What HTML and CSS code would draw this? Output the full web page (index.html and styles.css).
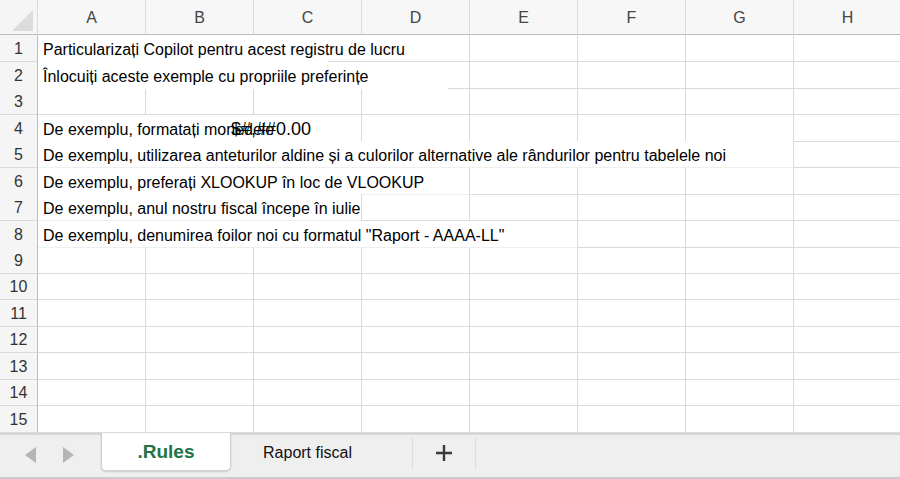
FILE: index.html
```html
<!DOCTYPE html>
<html lang="ro">
<head>
    <meta charset="UTF-8">
    <title>.Rules - Excel</title>
    <link rel="stylesheet" href="styles.css">
</head>
<body>
    <div class="sheet">
        <div class="row head">
            <div class="corner"><span class="tri"></span></div>
            <div class="col">A</div><div class="col">B</div><div class="col">C</div><div class="col">D</div>
            <div class="col">E</div><div class="col">F</div><div class="col">G</div><div class="col">H</div>
        </div>
        <div class="row">
            <div class="num">1</div>
            <div class="cell text span-4 cover-short">Particularizați Copilot pentru acest registru de lucru</div>
            <div class="cell"></div><div class="cell"></div><div class="cell"></div><div class="cell"></div>
        </div>
        <div class="row short">
            <div class="num">2</div>
            <div class="cell text span-4 cover-long">Înlocuiți aceste exemple cu propriile preferințe</div>
            <div class="cell"></div><div class="cell"></div><div class="cell"></div><div class="cell"></div>
        </div>
        <div class="row">
            <div class="num">3</div>
            <div class="cell"></div><div class="cell"></div><div class="cell"></div><div class="cell"></div>
            <div class="cell"></div><div class="cell"></div><div class="cell"></div><div class="cell"></div>
        </div>
        <div class="row short">
            <div class="num">4</div>
            <div class="cell text span-3">De exemplu, formatați monedele<span class="fmt">$#,##0.00</span></div>
            <div class="cell"></div><div class="cell"></div><div class="cell"></div><div class="cell"></div><div class="cell"></div>
        </div>
        <div class="row">
            <div class="num">5</div>
            <div class="cell text span-7">De exemplu, utilizarea anteturilor aldine și a culorilor alternative ale rândurilor pentru tabelele noi</div>
            <div class="cell"></div>
        </div>
        <div class="row short">
            <div class="num">6</div>
            <div class="cell text span-4">De exemplu, preferați XLOOKUP în loc de VLOOKUP</div>
            <div class="cell"></div><div class="cell"></div><div class="cell"></div><div class="cell"></div>
        </div>
        <div class="row">
            <div class="num">7</div>
            <div class="cell text span-3">De exemplu, anul nostru fiscal începe în iulie</div>
            <div class="cell"></div><div class="cell"></div><div class="cell"></div><div class="cell"></div><div class="cell"></div>
        </div>
        <div class="row short">
            <div class="num">8</div>
            <div class="cell text span-5">De exemplu, denumirea foilor noi cu formatul "Raport - AAAA-LL"</div>
            <div class="cell"></div><div class="cell"></div><div class="cell"></div>
        </div>
        <div class="row">
            <div class="num">9</div>
            <div class="cell"></div><div class="cell"></div><div class="cell"></div><div class="cell"></div>
            <div class="cell"></div><div class="cell"></div><div class="cell"></div><div class="cell"></div>
        </div>
        <div class="row short">
            <div class="num">10</div>
            <div class="cell"></div><div class="cell"></div><div class="cell"></div><div class="cell"></div>
            <div class="cell"></div><div class="cell"></div><div class="cell"></div><div class="cell"></div>
        </div>
        <div class="row">
            <div class="num">11</div>
            <div class="cell"></div><div class="cell"></div><div class="cell"></div><div class="cell"></div>
            <div class="cell"></div><div class="cell"></div><div class="cell"></div><div class="cell"></div>
        </div>
        <div class="row short">
            <div class="num">12</div>
            <div class="cell"></div><div class="cell"></div><div class="cell"></div><div class="cell"></div>
            <div class="cell"></div><div class="cell"></div><div class="cell"></div><div class="cell"></div>
        </div>
        <div class="row">
            <div class="num">13</div>
            <div class="cell"></div><div class="cell"></div><div class="cell"></div><div class="cell"></div>
            <div class="cell"></div><div class="cell"></div><div class="cell"></div><div class="cell"></div>
        </div>
        <div class="row short">
            <div class="num">14</div>
            <div class="cell"></div><div class="cell"></div><div class="cell"></div><div class="cell"></div>
            <div class="cell"></div><div class="cell"></div><div class="cell"></div><div class="cell"></div>
        </div>
        <div class="row">
            <div class="num">15</div>
            <div class="cell"></div><div class="cell"></div><div class="cell"></div><div class="cell"></div>
            <div class="cell"></div><div class="cell"></div><div class="cell"></div><div class="cell"></div>
        </div>
    </div>

    <div class="tabbar">
        <div class="nav">
            <span class="arrow left"></span>
            <span class="arrow right"></span>
        </div>
        <div class="tab active">.Rules</div>
        <div class="tab">Raport fiscal</div>
        <div class="add">
            <svg width="18" height="18" viewBox="0 0 18 18">
                <path d="M9 1v16M1 9h16" stroke="#3a3a3a" stroke-width="2.4" fill="none"/>
            </svg>
        </div>
    </div>
</body>
</html>
```

FILE: styles.css
```css
body {
    margin: 0;
    width: 900px;
    height: 479px;
    overflow: hidden;
    background-color: #fff;
    font-family: "Liberation Sans", Arial, sans-serif;
}

.sheet {
    width: 900px;
    height: 433px;
    overflow: hidden;
}

.row {
    display: grid;
    grid-template-columns: 38px repeat(8, 108px);
    height: 27px;
}

.row.short {
    height: 26px;
}

.row.head {
    height: 35px;
}

.row > div {
    box-sizing: border-box;
    border-right: 1px solid #dadada;
    border-bottom: 1px solid #dadada;
}

/* header row */
.corner {
    position: relative;
    background-color: #f5f5f5;
}

.head > div {
    border-bottom: 1px solid #bdbdbd;
}

.tri {
    position: absolute;
    right: 4px;
    bottom: 3px;
    width: 0;
    height: 0;
    border-left: 21px solid transparent;
    border-bottom: 21px solid #dcdcdc;
}

.col {
    background-color: #f7f7f7;
    color: #444;
    font-size: 16px;
    display: flex;
    align-items: center;
    justify-content: center;
    padding-top: 2px;
}

.row > .num {
    background-color: #f5f5f5;
    border-right: 1px solid #bdbdbd;
    color: #333;
    font-size: 16px;
    display: flex;
    align-items: center;
    justify-content: center;
    padding-top: 1px;
}

/* cells */
.text {
    position: relative;
    background-color: #fff;
    color: #000;
    font-size: 16px;
    line-height: 22px;
    padding: 4px 0 0 5px;
    white-space: nowrap;
}

.row > .text {
    border-bottom-color: #efefef;
}

.row > .cover-short,
.row > .cover-long {
    border-bottom-color: #dadada;
}

.cover-short::after,
.cover-long::after {
    content: "";
    position: absolute;
    left: 0;
    bottom: -1px;
    height: 1px;
    background-color: #fff;
}

.cover-short::after {
    width: 290px;
}

.cover-long::after {
    width: 410px;
}

.span-3 { grid-column: span 3; }
.span-4 { grid-column: span 4; }
.span-5 { grid-column: span 5; }
.span-7 { grid-column: span 7; }

.fmt {
    position: absolute;
    left: 193px;
    top: 4px;
    font-size: 18px;
    line-height: 20px;
    color: #000;
}

/* sheet tabs */
.tabbar {
    display: flex;
    height: 46px;
    box-sizing: border-box;
    background-color: #efefef;
    border-top: 2px solid #d6d6d6;
    border-bottom: 2px solid #cbcbcb;
}

.nav {
    width: 101px;
    display: flex;
    align-items: center;
    gap: 27px;
    padding-left: 25px;
    box-sizing: border-box;
    padding-bottom: 2px;
}

.arrow {
    width: 0;
    height: 0;
    border-top: 8px solid transparent;
    border-bottom: 8px solid transparent;
}

.arrow.left {
    border-right: 11px solid #b5b5b5;
}

.arrow.right {
    border-left: 11px solid #b5b5b5;
}

.tab {
    display: flex;
    align-items: center;
    justify-content: center;
    font-size: 16px;
    color: #111;
    height: 36px;
}

.tab.active {
    width: 130px;
    box-sizing: border-box;
    background-color: #fff;
    border: 1px solid #d0d0d0;
    border-top: none;
    border-radius: 0 0 5px 5px;
    box-shadow: 0 1px 2px rgba(0, 0, 0, 0.15);
    color: #217346;
    font-weight: bold;
    font-size: 19px;
    margin-top: -2px;
    height: 38px;
}

.tab:not(.active) {
    width: 182px;
    box-sizing: border-box;
    padding-right: 28px;
    margin-top: 2px;
    border-right: 1px solid #dcdcdc;
    height: 32px;
}

.add {
    width: 63px;
    height: 32px;
    margin-top: 2px;
    display: flex;
    align-items: center;
    justify-content: center;
    border-right: 1px solid #dcdcdc;
    box-sizing: border-box;
}
```
